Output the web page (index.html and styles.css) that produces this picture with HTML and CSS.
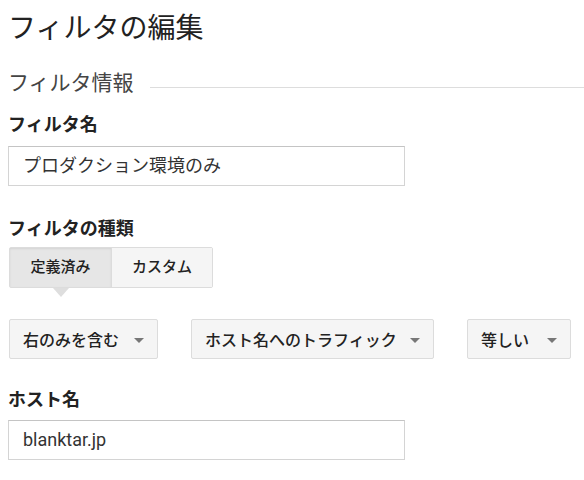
FILE: index.html
```html
<!DOCTYPE html>
<html lang="ja">
<head>
<meta charset="utf-8">
<title>フィルタの編集</title>
<link rel="stylesheet" href="styles.css">
</head>
<body>
<main class="page">
  <h1 class="title">フィルタの編集</h1>
  <div class="section-head">
    <span class="section-title">フィルタ情報</span>
    <span class="rule"></span>
  </div>

  <div class="field">
    <div class="label">フィルタ名</div>
    <div class="input">プロダクション環境のみ</div>
  </div>

  <div class="field field-type">
    <div class="label">フィルタの種類</div>
    <div class="toggle">
      <div class="toggle-btn is-on">定義済み</div>
      <div class="toggle-btn">カスタム</div>
    </div>
  </div>

  <div class="selects">
    <div class="select select-a"><span>右のみを含む</span><span class="caret"></span></div>
    <div class="select select-b"><span>ホスト名へのトラフィック</span><span class="caret"></span></div>
    <div class="select select-c"><span>等しい</span><span class="caret"></span></div>
  </div>

  <div class="field field-host">
    <div class="label">ホスト名</div>
    <div class="input">blanktar.jp</div>
  </div>
</main>
</body>
</html>
```

FILE: styles.css
```css
html, body {
  margin: 0;
  padding: 0;
  background: #ffffff;
}

body {
  font-family: Roboto, "Noto Sans CJK JP", sans-serif;
  color: #222222;
  overflow: hidden;
}

.page {
  padding: 11px 0 0 8px;
}

.title {
  margin: 0;
  font-size: 28px;
  line-height: 36px;
  font-weight: 400;
  color: #222222;
}

.section-head {
  display: flex;
  align-items: center;
  margin-top: 24px;
  height: 24px;
}

.section-title {
  font-size: 21px;
  line-height: 24px;
  color: #444444;
}

.rule {
  flex: 1;
  height: 1px;
  background: #dddddd;
  margin-left: 16px;
  margin-top: 8px;
}

.field {
  margin-top: 18px;
}

.field-type {
  margin-top: 31px;
}

.field-host {
  margin-top: 29px;
}

.label {
  font-size: 18px;
  line-height: 24px;
  font-weight: 700;
  color: #222222;
}

.input {
  margin-top: 9px;
  width: 397px;
  height: 40px;
  box-sizing: border-box;
  border: 1px solid #d4d4d4;
  border-top-color: #c4c4c4;
  padding: 0 14px;
  font-size: 18px;
  line-height: 38px;
  color: #333333;
}

.field-host .input {
  margin-top: 8px;
}

.toggle {
  margin-top: 6px;
  margin-left: 1px;
  display: inline-flex;
  border: 1px solid #dcdcdc;
  border-radius: 2px;
  height: 41px;
  box-sizing: border-box;
}

.toggle-btn {
  position: relative;
  width: 101px;
  box-sizing: border-box;
  font-size: 15px;
  font-weight: 500;
  line-height: 39px;
  text-align: center;
  background: #f5f5f5;
  color: #222222;
}

.toggle-btn + .toggle-btn {
  border-left: 1px solid #dcdcdc;
}

.toggle-btn.is-on {
  background: #e6e6e6;
  box-shadow: inset 0 1px 2px rgba(0, 0, 0, 0.08);
}

.toggle-btn.is-on::after {
  content: "";
  position: absolute;
  left: 50%;
  top: 100%;
  margin-left: -8px;
  margin-top: 1px;
  border-left: 8px solid transparent;
  border-right: 8px solid transparent;
  border-top: 9px solid #dedede;
}

.selects {
  display: flex;
  gap: 33px;
  margin-top: 31px;
  margin-left: 1px;
}

.select {
  display: flex;
  align-items: center;
  justify-content: space-between;
  height: 40px;
  box-sizing: border-box;
  border: 1px solid #dcdcdc;
  border-radius: 2px;
  background: #f5f5f5;
  padding: 0 13px 0 13px;
  font-size: 16px;
  font-weight: 500;
  color: #222222;
}

.select-a { width: 149px; }
.select-b { width: 243px; }
.select-c { width: 104px; }

.caret {
  width: 0;
  height: 0;
  border-left: 5px solid transparent;
  border-right: 5px solid transparent;
  border-top: 5px solid #777777;
  margin-top: 2px;
}
```
